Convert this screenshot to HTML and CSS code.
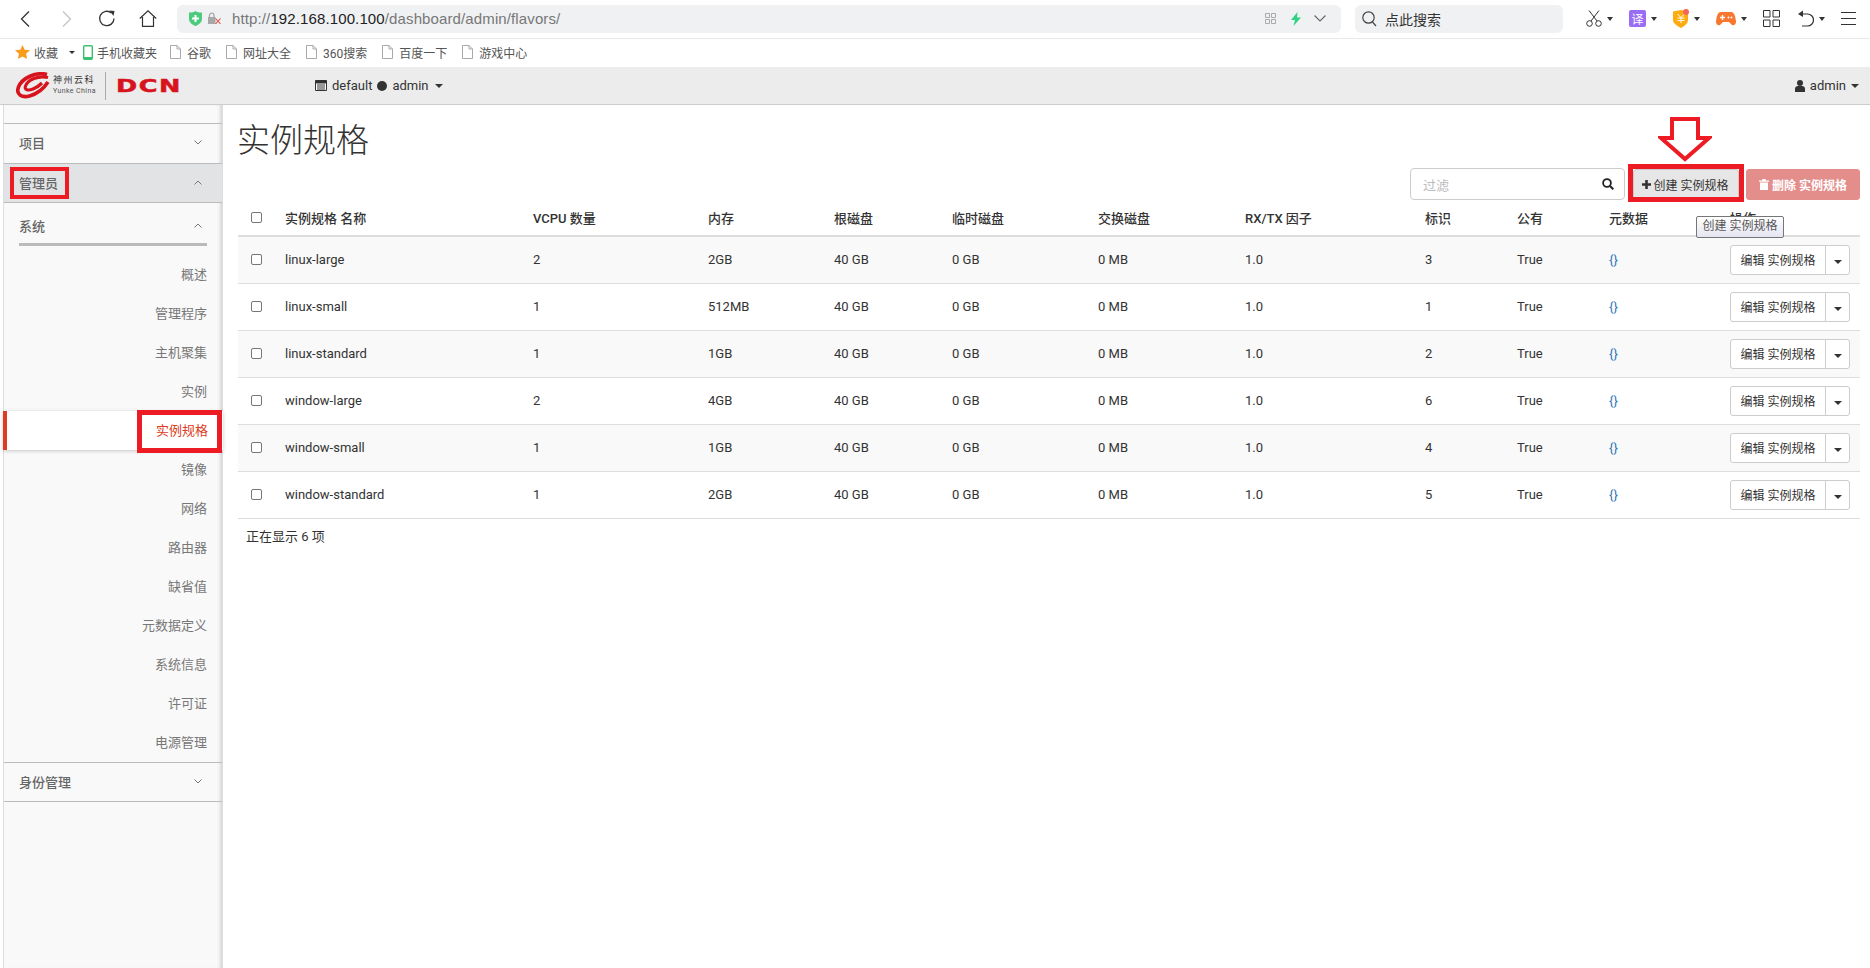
FILE: index.html
```html
<!DOCTYPE html>
<html lang="zh-CN">
  <head>
    <meta charset="UTF-8" />
    <title>实例规格</title>
    <link rel="stylesheet" href="styles.css">
  </head>
  <body>
    <svg class="sprites" width="0" height="0">
      <symbol id="doc" viewBox="0 0 11 14">
        <path d="M.5.5h6.5l3.5 3.5v9.5H.5zM7 .5V4h3.5" fill="#fff" stroke="#a9a9a9" />
      </symbol>
      <symbol id="chev-down" viewBox="0 0 8 5">
        <path d="M.5.5 4 4 7.500.5" fill="none" stroke="#777" />
      </symbol>
      <symbol id="chev-up" viewBox="0 0 8 5">
        <path d="M.5 4.500 4 1l3.500 3.500" fill="none" stroke="#777" />
      </symbol>
    </svg>

    <div class="browser-bar">
      <svg class="ic-back" width="10" height="16" viewBox="0 0 10 16"><path d="M9 .5 1.500 8 9 15.500" fill="none" stroke="#333" stroke-width="1.300" /></svg>
      <svg class="ic-forward" width="10" height="16" viewBox="0 0 10 16"><path d="M1 .5 8.500 8 1 15.500" fill="none" stroke="#c4c4c4" stroke-width="1.300" /></svg>
      <svg class="ic-reload" width="18" height="17" viewBox="0 0 18 17"><path d="M13.500 3A7.200 7.200 0 1 0 16 8.500" fill="none" stroke="#333" stroke-width="1.300" /><path d="M11.500 .5 16.500 1 15.500 6z" fill="#333" /></svg>
      <svg class="ic-home" width="18" height="17" viewBox="0 0 18 17"><path d="M.8 8.500 9 .8l8.200 7.700M3.500 7v9.300h11V7" fill="none" stroke="#333" stroke-width="1.200" /></svg>

      <div class="url-box">
        <svg class="ic-shield" width="13" height="15" viewBox="0 0 13 15"><path d="M0 1.500C3 1.500 5 1 6.500 0 8 1 10 1.500 13 1.500V8c0 3.500-3 5.500-6.500 7C3 13.500 0 11.500 0 8z" fill="#4ccb7c" /><path d="M5.500 4h2v2.500H10v2H7.500V11h-2V8.500H3v-2h2.500z" fill="#fff" /></svg>
        <svg class="ic-lock" width="13" height="13" viewBox="0 0 13 13"><rect x="0" y="5" width="7.500" height="7" fill="#a8a8a8" /><path d="M1.500 5V3a2.300 2.300 0 0 1 4.500 0v2" fill="none" stroke="#a8a8a8" stroke-width="1.300" /><path d="M7.500 6.500 12.500 12M12.500 6.500 7.500 12" stroke="#e04a3a" stroke-width="1.100" /></svg>
        <span class="url-text">http://<b>192.168.100.100</b>/dashboard/admin/flavors/</span>
        <svg class="ic-qr" width="11" height="11" viewBox="0 0 11 11"><path d="M.5.500h4v4h-4zM6.500.500h4v4h-4zM.5 6.500h4v4h-4zM6.500 6.500h4v4h-4z" fill="none" stroke="#aaa" /></svg>
        <svg class="ic-bolt" width="10" height="14" viewBox="0 0 10 14"><path d="M6.500 0 0 8h4L2.500 14 10 5.500H6z" fill="#2fd183" /></svg>
        <svg class="ic-more" width="12" height="7" viewBox="0 0 12 7"><path d="M.5.500 6 6 11.500.500" fill="none" stroke="#666" stroke-width="1.100" /></svg>
      </div>

      <div class="search-box">
        <svg width="15" height="16" viewBox="0 0 15 16"><circle cx="6.500" cy="6.500" r="5.700" fill="none" stroke="#444" stroke-width="1.200" /><path d="m10.500 11 3.500 4" stroke="#444" stroke-width="1.200" /></svg>
        <span>点此搜索</span>
      </div>

      <div class="tools">
        <svg class="tool" width="16" height="17" viewBox="0 0 16 17"><circle cx="3.500" cy="13.500" r="2.800" fill="none" stroke="#333" /><circle cx="12.500" cy="13.500" r="2.800" fill="none" stroke="#333" /><path d="M3 .5 11 11M13 .5 5 11" stroke="#333" /></svg>
        <i class="caret tool-caret"></i>
        <span class="tool tool-yi">译</span>
        <i class="caret tool-caret"></i>
        <svg class="tool" width="16" height="19" viewBox="0 0 16 19"><path d="M0 2.500 8 1l7 1.500V11c0 3.500-3.500 6-7 8-3.500-2-8-4.500-8-8z" fill="#fdab0e" /><path d="M4.500 5 8 8.500 11.500 5M8 8.500V14M4.500 9h7M4.500 11.500h7" fill="none" stroke="#fff" /><circle cx="13" cy="3" r="3" fill="#f5655c" /></svg>
        <i class="caret tool-caret"></i>
        <svg class="tool" width="20" height="16" viewBox="0 0 20 16"><path d="M5 1h10c3 0 4 3 5 9 .4 3-2 5-4 4l-3-3H7l-3 3c-2 1-4.400-1-4-4C1 4 2 1 5 1z" fill="#f9772f" /><path d="M4 6.500h5M6.500 4v5" stroke="#fff" stroke-width="1.400" /><circle cx="12.500" cy="6.500" r="1" fill="#fff" /><circle cx="15.500" cy="6.500" r="1" fill="#fff" /></svg>
        <i class="caret tool-caret"></i>
        <svg class="tool tool-grid" width="17" height="17" viewBox="0 0 17 17"><path d="M.5.500h6.500v6.500H.5zM10 .500h6.500v6.500H10zM.5 10H7v6.500H.5zM10 10h6.500v6.500H10z" fill="none" stroke="#333" /></svg>
        <svg class="tool tool-undo" width="16" height="17" viewBox="0 0 16 17"><path d="M3 4h6.500a6 6 0 0 1 0 12H4" fill="none" stroke="#333" stroke-width="1.200" /><path d="M5 .5V7L0 4z" fill="#333" /></svg>
        <i class="caret tool-caret"></i>
        <svg class="tool tool-menu" width="15" height="13" viewBox="0 0 15 13"><path d="M0 .5h15M0 6.500h15M0 12.500h15" stroke="#333" /></svg>
      </div>
    </div>

    <div class="bookmarks">
      <svg class="bm-star" width="15" height="14" viewBox="0 0 15 14"><path d="m7.500 0 2.200 4.700 5.300.6-3.900 3.500 1 5.200-4.600-2.600L2.900 14l1-5.200L0 5.300l5.300-.6z" fill="#f99c1c" /></svg>
      <span class="bm-first">收藏</span>
      <i class="caret bm-caret"></i>
      <svg class="bm-phone" width="10" height="15" viewBox="0 0 10 15"><rect x=".7" y=".7" width="8.600" height="13.600" rx="1" fill="#fff" stroke="#3cbf72" stroke-width="1.400" /><path d="M1 12h8v2H1z" fill="#3cbf72" /></svg>
      <span class="bm-label">手机收藏夹</span>
      <svg class="bm-doc" width="11" height="14"><use href="#doc" /></svg><span class="bm-label">谷歌</span>
      <svg class="bm-doc" width="11" height="14"><use href="#doc" /></svg><span class="bm-label">网址大全</span>
      <svg class="bm-doc" width="11" height="14"><use href="#doc" /></svg><span class="bm-label">360搜索</span>
      <svg class="bm-doc" width="11" height="14"><use href="#doc" /></svg><span class="bm-label">百度一下</span>
      <svg class="bm-doc" width="11" height="14"><use href="#doc" /></svg><span class="bm-label">游戏中心</span>
    </div>

    <div class="topbar">
      <div class="logo">
        <svg class="logo-swirl" width="34" height="27" viewBox="0 0 34 27">
          <path d="M31 2.500C20-.5 6 6 2.500 15c-3 8 4 11 11 9 7-2 14-7 18.500-14" fill="none" stroke="#d7141d" stroke-width="3.600" />
          <path d="M32 5.500C22 3 12 8 9.500 14c-1.500 4 2.500 5 7.500 3 4-1.500 7-4 9-6" fill="none" stroke="#d7141d" stroke-width="3.200" />
        </svg>
        <div class="logo-text">
          <span class="logo-cn">神州云科</span>
          <span class="logo-en">Yunke China</span>
        </div>
        <span class="logo-rule"></span>
        <span class="logo-dcn">DCN</span>
      </div>
      <div class="project-menu">
        <svg width="12" height="11" viewBox="0 0 12 11"><path d="M.5.500h11v10H.5z" fill="#fff" stroke="#333" /><path d="M.5 1h11v2H.5zM2 5h8M2 7h8M2 9h8" fill="#333" stroke="#333" /></svg>
        <span>default</span>
        <i class="dot"></i>
        <span>admin</span>
        <i class="caret"></i>
      </div>
      <div class="user-menu">
        <svg width="10" height="12" viewBox="0 0 10 12"><circle cx="5" cy="3" r="3" fill="#333" /><path d="M0 12V8.500C0 7 1.500 6 3 6h4c1.500 0 3 1 3 2.500V12z" fill="#333" /></svg>
        <span>admin</span>
        <i class="caret"></i>
      </div>
    </div>

    <div class="page">
      <nav class="sidebar">
        <div class="nav-head">项目<svg width="8" height="5"><use href="#chev-down" /></svg></div>
        <div class="nav-head open">管理员<svg width="8" height="5"><use href="#chev-up" /></svg></div>
        <div class="nav-group">系统<svg width="8" height="5"><use href="#chev-up" /></svg></div>
        <ul class="nav-list">
          <li>概述</li>
          <li>管理程序</li>
          <li>主机聚集</li>
          <li>实例</li>
          <li class="active">实例规格</li>
          <li>镜像</li>
          <li>网络</li>
          <li>路由器</li>
          <li>缺省值</li>
          <li>元数据定义</li>
          <li>系统信息</li>
          <li>许可证</li>
          <li>电源管理</li>
        </ul>
        <div class="nav-head nav-last">身份管理<svg width="8" height="5"><use href="#chev-down" /></svg></div>
      </nav>

      <main class="content">
        <h1>实例规格</h1>
        <div class="actions">
          <div class="filter">
            <span>过滤</span>
            <svg width="12" height="12" viewBox="0 0 12 12"><circle cx="5" cy="5" r="3.900" fill="none" stroke="#222" stroke-width="1.800" /><path d="m8 8 3.300 3.300" stroke="#222" stroke-width="2" /></svg>
          </div>
          <button class="btn btn-create">
            <svg width="9" height="9" viewBox="0 0 9 9"><path d="M3.200 0h2.600v3.200H9v2.600H5.800V9H3.200V5.800H0V3.200h3.200z" fill="#333" /></svg>
            创建 实例规格
          </button>
          <button class="btn btn-delete">
            <svg width="10" height="11" viewBox="0 0 10 11"><path d="M3.500 0h3l.5 1.500h3v1.200H0V1.500h3zM1 3.500h8V11H1z" fill="#fff" /></svg>
            删除 实例规格
          </button>
        </div>

        <table class="flavors">
          <colgroup>
            <col class="c-check"><col class="c-name"><col class="c-vcpu"><col class="c-ram"><col class="c-root">
            <col class="c-temp"><col class="c-swap"><col class="c-rxtx"><col class="c-id"><col class="c-public">
            <col class="c-meta"><col class="c-ops">
          </colgroup>
          <thead>
            <tr>
              <th><input type="checkbox"></th>
              <th>实例规格 名称</th><th>VCPU 数量</th><th>内存</th><th>根磁盘</th><th>临时磁盘</th>
              <th>交换磁盘</th><th>RX/TX 因子</th><th>标识</th><th>公有</th><th>元数据</th><th>操作</th>
            </tr>
          </thead>
          <tbody>
            <tr>
              <td><input type="checkbox"></td>
              <td>linux-large</td><td>2</td><td>2GB</td><td>40 GB</td><td>0 GB</td><td>0 MB</td><td>1.0</td><td>3</td><td>True</td>
              <td><a class="meta">{}</a></td>
              <td><div class="btn-group"><button>编辑 实例规格</button><button class="more"><i class="caret"></i></button></div></td>
            </tr>
            <tr>
              <td><input type="checkbox"></td>
              <td>linux-small</td><td>1</td><td>512MB</td><td>40 GB</td><td>0 GB</td><td>0 MB</td><td>1.0</td><td>1</td><td>True</td>
              <td><a class="meta">{}</a></td>
              <td><div class="btn-group"><button>编辑 实例规格</button><button class="more"><i class="caret"></i></button></div></td>
            </tr>
            <tr>
              <td><input type="checkbox"></td>
              <td>linux-standard</td><td>1</td><td>1GB</td><td>40 GB</td><td>0 GB</td><td>0 MB</td><td>1.0</td><td>2</td><td>True</td>
              <td><a class="meta">{}</a></td>
              <td><div class="btn-group"><button>编辑 实例规格</button><button class="more"><i class="caret"></i></button></div></td>
            </tr>
            <tr>
              <td><input type="checkbox"></td>
              <td>window-large</td><td>2</td><td>4GB</td><td>40 GB</td><td>0 GB</td><td>0 MB</td><td>1.0</td><td>6</td><td>True</td>
              <td><a class="meta">{}</a></td>
              <td><div class="btn-group"><button>编辑 实例规格</button><button class="more"><i class="caret"></i></button></div></td>
            </tr>
            <tr>
              <td><input type="checkbox"></td>
              <td>window-small</td><td>1</td><td>1GB</td><td>40 GB</td><td>0 GB</td><td>0 MB</td><td>1.0</td><td>4</td><td>True</td>
              <td><a class="meta">{}</a></td>
              <td><div class="btn-group"><button>编辑 实例规格</button><button class="more"><i class="caret"></i></button></div></td>
            </tr>
            <tr>
              <td><input type="checkbox"></td>
              <td>window-standard</td><td>1</td><td>2GB</td><td>40 GB</td><td>0 GB</td><td>0 MB</td><td>1.0</td><td>5</td><td>True</td>
              <td><a class="meta">{}</a></td>
              <td><div class="btn-group"><button>编辑 实例规格</button><button class="more"><i class="caret"></i></button></div></td>
            </tr>
          </tbody>
        </table>
        <p class="count">正在显示 6 项</p>
      </main>
    </div>

    <!-- red marks drawn over the screenshot -->
    <div class="mark mark-admin"></div>
    <div class="mark mark-flavor"></div>
    <div class="mark mark-create"></div>
    <svg class="mark-arrow" width="54" height="45" viewBox="0 0 54 45"><path d="M14 2h26v19h11L27 42 3 21h11z" fill="#fff" stroke="#ed1c24" stroke-width="4" /></svg>
    <div class="tooltip">创建 实例规格</div>
  </body>
</html>
```

FILE: styles.css
```css
* {
  margin: 0;
  padding: 0;
  box-sizing: border-box;
}

body {
  width: 1870px;
  height: 968px;
  overflow: hidden;
  position: relative;
  background: #fff;
  color: #333;
  font-family: 'Roboto', 'Noto Sans CJK SC', sans-serif;
  font-size: 13px;
}

.sprites {
  position: absolute;
}

svg {
  flex-shrink: 0;
  display: block;
}

.caret {
  display: inline-block;
  width: 0;
  height: 0;
  border-left: 4px solid transparent;
  border-right: 4px solid transparent;
  border-top: 4px solid #333;
}

/* browser chrome */
.browser-bar {
  height: 39px;
  display: flex;
  align-items: center;
  padding-left: 20px;
  border-bottom: 1px solid #e8e8e8;
  padding-bottom: 1px;
}

.ic-forward {
  margin-left: 32px;
}

.ic-reload {
  margin-left: 26px;
}

.ic-home {
  margin-left: 23px;
}

.url-box {
  width: 1164px;
  height: 28px;
  margin-left: 20px;
  display: flex;
  align-items: center;
  padding-left: 12px;
  background: #f0f1f3;
  border-radius: 6px;
}

.ic-lock {
  margin-left: 6px;
}

.url-text {
  margin-left: 11px;
  font-family: 'Liberation Sans', sans-serif;
  font-size: 15px;
  letter-spacing: .12px;
  color: #777;
  width: 1033px;
}

.url-text b {
  font-weight: normal;
  color: #222;
}

.ic-bolt {
  margin-left: 15px;
}

.ic-more {
  margin-left: 13px;
}

.search-box {
  width: 208px;
  height: 28px;
  margin-left: 14px;
  display: flex;
  align-items: center;
  gap: 8px;
  padding-left: 7px;
  background: #f0f1f3;
  border-radius: 6px;
  font-size: 14px;
  color: #333;
}

.tools {
  display: flex;
  align-items: center;
  margin-left: 23px;
}

.tool-caret {
  margin-left: 5px;
  margin-right: 16px;
  border-left-width: 3px;
  border-right-width: 3px;
}

.tool-yi {
  width: 17px;
  height: 17px;
  display: flex;
  align-items: center;
  justify-content: center;
  background: #9a6df5;
  border-radius: 2px;
  color: #fff;
  font-size: 12px;
}

.tool-grid {
  margin-right: 18px;
}

.bookmarks {
  height: 28px;
  display: flex;
  align-items: center;
  padding-left: 15px;
  padding-bottom: 2px;
  font-size: 12px;
  color: #555;
}

.bm-first {
  margin-left: 4px;
}

.bm-caret {
  margin-left: 11px;
  border-left-width: 3px;
  border-right-width: 3px;
  border-top-width: 3px;
}

.bm-phone {
  margin-left: 8px;
}

.bm-label {
  margin-left: 4px;
}

.bm-phone + .bm-label {
  margin-right: -2px;
}

.bm-doc {
  margin-left: 15px;
}

.bm-doc + .bm-label {
  margin-left: 6px;
}

/* dashboard header */
.topbar {
  height: 38px;
  display: flex;
  align-items: center;
  padding-left: 16px;
  padding-right: 11px;
  background: #ececec;
  border-bottom: 1px solid #ccc;
}

.logo {
  width: 167px;
  display: flex;
  align-items: center;
}

.logo-text {
  margin-left: 3px;
  width: 44px;
  display: flex;
  flex-direction: column;
  line-height: 11px;
}

.logo-cn {
  font-size: 9px;
  letter-spacing: 1.500px;
  color: #333;
}

.logo-en {
  font-size: 7px;
  letter-spacing: .4px;
  white-space: nowrap;
  color: #555;
}

.logo-rule {
  width: 1px;
  height: 28px;
  margin-left: 8px;
  background: #aaa;
}

.logo-dcn {
  margin-left: 10px;
  font-family: 'DejaVu Sans', sans-serif;
  font-size: 17px;
  font-weight: bold;
  letter-spacing: 1px;
  color: #d7141d;
  transform: scaleX(1.500);
  transform-origin: left center;
  -webkit-text-stroke: .5px #d7141d;
}

.project-menu {
  margin-left: 132px;
  display: flex;
  align-items: center;
  gap: 5px;
}

.dot {
  width: 10px;
  height: 10px;
  border-radius: 50%;
  background: #333;
}

.project-menu .caret {
  margin-left: 1px;
}

.user-menu {
  margin-left: auto;
  display: flex;
  align-items: center;
  gap: 5px;
}

/* page body */
.page {
  height: 863px;
  display: flex;
}

.sidebar {
  width: 220px;
  margin-left: 3px;
  background: #f9f9f9;
  border-left: 1px solid #ddd;
  border-right: 1px solid #ddd;
  box-shadow: inset -4px 0 4px -3px rgba(0, 0, 0, 0.2);
  padding-top: 18px;
  color: #777;
}

.nav-head {
  height: 40px;
  display: flex;
  align-items: center;
  justify-content: space-between;
  padding: 0 20px 2px 15px;
  border-top: 1px solid #bbb;
  font-weight: 500;
  color: #666;
}

.nav-head.open {
  background: #e2e3e5;
  border-bottom: 1px solid #bbb;
}

.nav-last {
  border-bottom: 1px solid #bbb;
}

.nav-group {
  height: 43px;
  margin-left: 15px;
  margin-right: 15px;
  padding-top: 5px;
  padding-right: 5px;
  display: flex;
  align-items: center;
  justify-content: space-between;
  border-bottom: 3px solid #bbb;
  font-weight: 500;
  color: #666;
}

.nav-list {
  list-style: none;
  padding-top: 9px;
}

.nav-list li {
  height: 39px;
  line-height: 39px;
  padding-right: 15px;
  text-align: right;
}

.nav-list .active {
  margin-left: -1px;
  margin-right: -1px;
  background: #fff;
  border-left: 4px solid #dd3b22;
  color: #dd3b22;
  box-shadow: 0 1px 4px rgba(0, 0, 0, 0.2);
}

.content {
  flex: 1;
  padding: 0 10px 0 15px;
  min-width: 0;
}

h1 {
  height: 63px;
  margin-left: -1px;
  font-size: 33px;
  font-weight: 300;
  line-height: 48px;
  padding-top: 12px;
}

.actions {
  height: 33px;
  display: flex;
  justify-content: flex-end;
  align-items: flex-start;
  padding-top: 1px;
}

.filter {
  width: 215px;
  height: 32px;
  margin-top: -1px;
  display: flex;
  align-items: center;
  justify-content: space-between;
  padding: 0 10px 0 12px;
  border: 1px solid #ccc;
  border-radius: 4px;
  color: #bbb;
}

.btn {
  height: 31px;
  display: flex;
  align-items: center;
  justify-content: center;
  gap: 3px;
  border: 1px solid #ccc;
  border-radius: 3px;
  font-family: inherit;
  font-size: 12px;
}

.btn-create {
  width: 106px;
  margin-left: 8px;
  padding-right: 2px;
  background: #e6e6e6;
  color: #333;
}

.btn-delete {
  width: 114px;
  margin-left: 7px;
  background: #e48e8c;
  border-color: #e48e8c;
  color: #fff;
  font-weight: bold;
}

.flavors {
  width: 100%;
  table-layout: fixed;
  border-collapse: collapse;
}

.c-check { width: 39px; }
.c-name { width: 248px; }
.c-vcpu { width: 175px; }
.c-ram { width: 126px; }
.c-root { width: 118px; }
.c-temp { width: 146px; }
.c-swap { width: 147px; }
.c-rxtx { width: 180px; }
.c-id { width: 92px; }
.c-public { width: 92px; }
.c-meta { width: 121px; }

.flavors th {
  height: 35px;
  padding: 0 8px 2px;
  text-align: left;
  font-weight: 500;
  border-bottom: 2px solid #ddd;
}

.flavors td {
  height: 47px;
  padding: 0 8px;
  border-bottom: 1px solid #ddd;
}

.flavors tbody tr:nth-child(odd) {
  background: #f9f9f9;
}

.flavors input {
  display: block;
  appearance: none;
  width: 11px;
  height: 11px;
  margin-left: 5px;
  border: 1px solid #767676;
  border-radius: 2px;
  background: #fff;
}

.meta {
  color: #337ab7;
}

.btn-group {
  display: flex;
}

.btn-group button {
  width: 96px;
  height: 30px;
  background: #fff;
  border: 1px solid #ccc;
  border-radius: 3px 0 0 3px;
  font-family: inherit;
  font-size: 12px;
  color: #333;
}

.btn-group .more {
  width: 25px;
  margin-left: -1px;
  border-radius: 0 3px 3px 0;
}

.count {
  padding: 7px 8px 0;
}

/* annotations and tooltip */
.mark {
  position: absolute;
  border: 4px solid #ed1c24;
}

.mark-admin {
  left: 10px;
  top: 167px;
  width: 59px;
  height: 32px;
}

.mark-flavor {
  left: 137px;
  top: 410px;
  width: 85px;
  height: 43px;
  border-width: 5px;
}

.mark-create {
  left: 1628px;
  top: 164px;
  width: 116px;
  height: 38px;
  border-width: 5px;
}

.mark-arrow {
  position: absolute;
  left: 1658px;
  top: 117px;
}

.tooltip {
  position: absolute;
  left: 1696px;
  top: 216px;
  width: 88px;
  height: 22px;
  line-height: 19px;
  text-align: center;
  border: 1px solid #767676;
  border-radius: 2px;
  background: linear-gradient(#fff, #e4e5f0);
  font-size: 12px;
  color: #575757;
}
```
